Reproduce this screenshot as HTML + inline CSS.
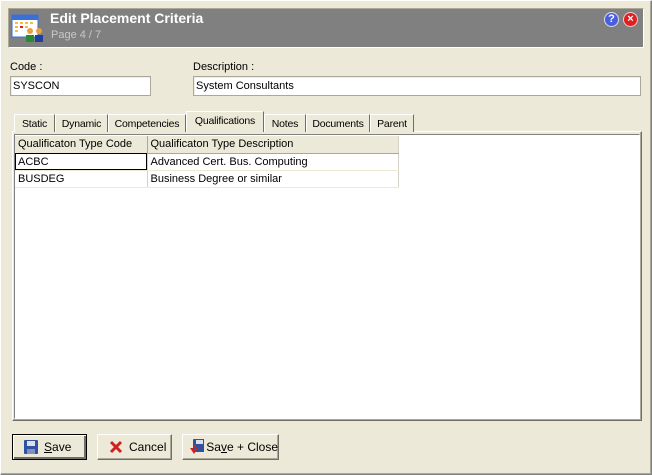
<!DOCTYPE html>
<html><head><style>
*{margin:0;padding:0;box-sizing:border-box}
body{width:652px;height:475px;background:#ece9d8;font-family:"Liberation Sans",Tahoma,sans-serif;font-size:11px;color:#000;position:relative;overflow:hidden}
.a{position:absolute}
.win{left:0;top:0;width:652px;height:475px;border:1px solid #fff;border-right-color:#808080;border-bottom-color:#808080;box-shadow:inset -1px -1px 0 #aca899}
.title{left:8px;top:8px;width:636px;height:40px;background:#808080;border:1px solid #fff;border-top-color:#aca899;border-left-color:#aca899}
.inp{background:#fff;border:1px solid #aca899;box-shadow:inset 1px 1px 0 #f0efe6;height:20px;padding:3px 2px;font-size:11px}
.tab{top:114px;height:18px;border:1px solid #fff;border-right-color:#716f64;border-bottom:none;padding:3px 0 0;text-align:center;background:#ece9d8;font-size:10.5px;white-space:nowrap;letter-spacing:-0.2px}
.btn{top:434px;height:26px;border:1px solid #fff;border-right-color:#716f64;border-bottom-color:#716f64;box-shadow:inset -1px -1px 0 #aca899;font-size:12px;display:flex;align-items:center;padding-left:11px;white-space:nowrap}
td{height:17px;border-right:1px solid #d4d0c8;border-bottom:1px solid #ece9d8;padding:0 3px;font-size:11px;white-space:nowrap}
</style></head><body>
<div class="a win"></div>
<div class="a title"></div>
<svg class="a" style="left:11px;top:12px" width="34" height="32" viewBox="0 0 34 32">
<rect x="1" y="3" width="26" height="22" fill="#fff" stroke="#3a6fd8"/>
<rect x="1" y="3" width="26" height="5" fill="#3a6fd8"/>
<g fill="#f0c040"><rect x="4" y="10" width="3" height="2"/><rect x="9" y="10" width="3" height="2"/><rect x="14" y="10" width="3" height="2"/><rect x="19" y="10" width="3" height="2"/><rect x="4" y="14" width="3" height="2"/><rect x="14" y="14" width="3" height="2"/><rect x="4" y="18" width="3" height="2"/></g>
<rect x="9" y="14" width="3" height="2" fill="#e02020"/>
<circle cx="19" cy="19" r="3" fill="#e8a040"/><rect x="15" y="23" width="8" height="7" fill="#2a8a30"/>
<circle cx="28" cy="19" r="3" fill="#e8a040"/><rect x="24" y="23" width="8" height="7" fill="#2040a0"/>
</svg>
<div class="a" style="left:50px;top:10px;color:#fff;font-weight:bold;font-size:14px">Edit Placement Criteria</div>
<div class="a" style="left:51px;top:29px;color:#c8c8c8;font-size:11px">Page 4 / 7</div>
<div class="a" style="left:604px;top:12px;width:15px;height:15px;border-radius:50%;background:#4a5ee0;border:1px solid #dde;color:#fff;font-weight:bold;font-size:11px;text-align:center;line-height:13px">?</div>
<div class="a" style="left:623px;top:12px;width:15px;height:15px;border-radius:50%;background:#e02020;border:1px solid #ecc;color:#fff;font-weight:bold;font-size:11px;text-align:center;line-height:13px">×</div>
<div class="a" style="left:10px;top:61px">Code :</div>
<div class="a inp" style="left:10px;top:76px;width:141px">SYSCON</div>
<div class="a" style="left:193px;top:61px">Description :</div>
<div class="a inp" style="left:193px;top:76px;width:448px">System Consultants</div>
<div class="a" style="left:12px;top:131px;width:630px;height:290px;border:1px solid #fff;border-right-color:#716f64;border-bottom-color:#716f64;box-shadow:inset -1px -1px 0 #aca899"></div>
<div class="a" style="left:14px;top:134px;width:626px;height:285px;background:#fff;border:1px solid #808080;border-right-color:#fff;border-bottom-color:#fff"></div>
<div class="a tab" style="left:14px;width:41px">Static</div>
<div class="a tab" style="left:55px;width:53px">Dynamic</div>
<div class="a tab" style="left:108px;width:78px">Competencies</div>
<div class="a tab" style="left:186px;top:111px;height:21px;width:78px;border-right-color:#716f64">Qualifications</div>
<div class="a tab" style="left:264px;width:42px">Notes</div>
<div class="a tab" style="left:306px;width:64px">Documents</div>
<div class="a tab" style="left:370px;width:44px">Parent</div>
<table class="a" style="left:15px;top:136px;border-collapse:collapse;table-layout:fixed">
<tr style="background:#ece9d8"><td style="width:132px;border-right:1px solid #aca899;border-bottom:1px solid #aca899">Qualificaton Type Code</td><td style="width:251px;border-bottom:1px solid #aca899">Qualificaton Type Description</td></tr>
<tr><td style="outline:1px solid #000;outline-offset:-1px">ACBC</td><td>Advanced Cert. Bus. Computing</td></tr>
<tr><td>BUSDEG</td><td>Business Degree or similar</td></tr>
</table>
<div class="a btn" style="left:12px;width:75px;border:1px solid #000;box-shadow:inset 1px 1px 0 #fff,inset -2px -2px 0 #716f64">
<svg width="14" height="14" style="margin-right:6px"><rect x="0" y="0" width="14" height="14" rx="1" fill="#3050a0"/><rect x="3" y="1" width="8" height="5" fill="#dde"/><rect x="3" y="9" width="8" height="5" fill="#8090c0"/></svg><u>S</u>ave</div>
<div class="a btn" style="left:97px;width:75px">
<svg width="14" height="14" style="margin-right:6px"><path d="M2 2L12 12M12 2L2 12" stroke="#d02020" stroke-width="3"/></svg>Cancel</div>
<div class="a btn" style="left:182px;width:97px;padding-left:7px">
<svg width="16" height="16" style="margin-right:2px"><rect x="3" y="0" width="13" height="13" rx="1" fill="#3050a0"/><rect x="6" y="1" width="7" height="4" fill="#dde"/><path d="M0 9L4 15L8 9Z M3 6H6V10H3Z" fill="#d02020"/></svg><span>Sa<u>v</u>e + Close</span></div>
</body></html>
